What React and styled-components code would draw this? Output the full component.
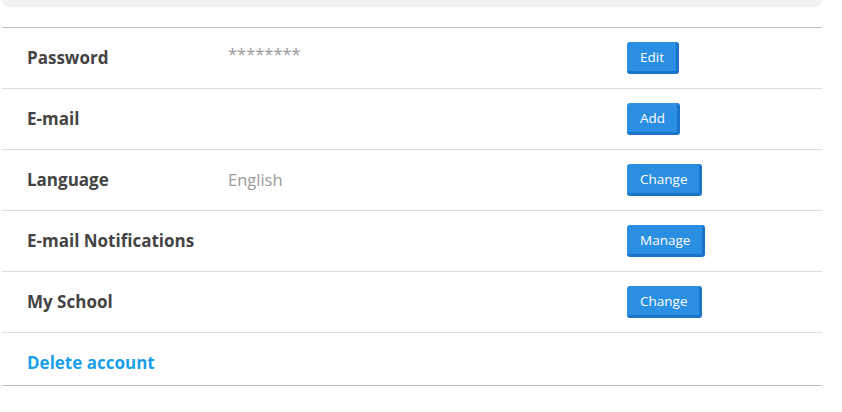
import React from 'react';
import styled, { createGlobalStyle } from 'styled-components';

const GlobalStyle = createGlobalStyle`
  body {
    margin: 0;
    background: #fff;
    font-family: "Open Sans", "Liberation Sans", sans-serif;
  }
`;

const rows = [
  { label: 'Password', value: '********', secret: true, action: 'Edit' },
  { label: 'E-mail', value: '', action: 'Add' },
  { label: 'Language', value: 'English', action: 'Change' },
  { label: 'E-mail Notifications', value: '', action: 'Manage' },
  { label: 'My School', value: '', action: 'Change' },
];

const App = () => {
  return (
    <>
      <GlobalStyle />
      <Page>
        <TopPanel />
        <Settings>
          {rows.map((row, i) => (
            <Row key={i}>
              <Label>{row.label}</Label>
              <Value $secret={row.secret}>{row.value}</Value>
              <ActionCell>
                <Button>{row.action}</Button>
              </ActionCell>
            </Row>
          ))}
          <FooterRow>
            <DeleteLink href="#">Delete account</DeleteLink>
          </FooterRow>
        </Settings>
      </Page>
    </>
  );
};

export default App;

const Page = styled.div`
  width: 820px;
  margin-left: 2px;
`;

const TopPanel = styled.div`
  height: 7px;
  background-color: #f2f2f2;
  border-radius: 0 0 6px 6px;
  margin-bottom: 20px;
`;

const Settings = styled.div`
  border-top: 1px solid #bdbdbd;
  border-bottom: 1px solid #bdbdbd;
`;

const Row = styled.div`
  display: grid;
  grid-template-columns: 201px 399px 1fr;
  align-items: center;
  height: 60px;
  padding-left: 25px;
  border-bottom: 1px solid #dddddd;
`;

const Label = styled.div`
  font-size: 17px;
  font-weight: 700;
  color: #444444;
  margin-top: -2px;
`;

const Value = styled.div`
  font-size: 16.5px;
  color: #9a9a9a;
  align-self: ${(p) => (p.$secret ? 'start' : 'center')};
  margin-top: ${(p) => (p.$secret ? '14px' : '-2px')};
`;

const ActionCell = styled.div`
  display: flex;
  align-items: center;
  margin-top: -1px;
`;

const Button = styled.button`
  height: 32px;
  padding: 2px 12px 0 13px;
  font-family: "Open Sans", "Liberation Sans", sans-serif;
  font-size: 13.5px;
  color: #ffffff;
  background-color: #2a8ee2;
  border: none;
  border-bottom: 3px solid #1a74c8;
  border-right: 3px solid #1a74c8;
  border-radius: 3px;
  cursor: pointer;
`;

const FooterRow = styled.div`
  display: flex;
  align-items: center;
  height: 46px;
  padding: 6px 0 0 25px;
`;

const DeleteLink = styled.a`
  font-size: 17px;
  font-weight: 700;
  color: #1a9fe8;
  text-decoration: none;
`;
